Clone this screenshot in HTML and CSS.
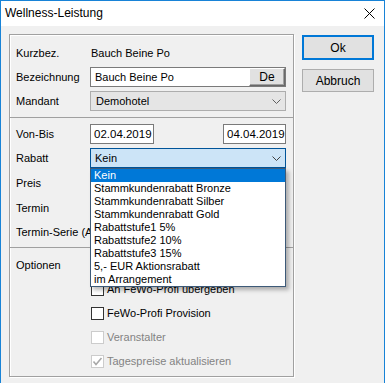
FILE: index.html
```html
<!DOCTYPE html>
<html lang="de">
<head>
  <meta charset="UTF-8" />
  <title>Wellness-Leistung</title>
  <link rel="stylesheet" href="styles.css">
</head>
<body>
  <div class="window">
    <div class="titlebar">
      <span class="title">Wellness-Leistung</span>
      <svg class="close" width="11" height="11" viewBox="0 0 11 11">
        <path d="M0.5 0.5 L10.5 10.5 M10.5 0.5 L0.5 10.5" stroke="#000" stroke-width="1" fill="none"/>
      </svg>
    </div>
    <div class="client">
      <div class="group">
        <div class="section s1">
          <span class="lbl">Kurzbez.</span>
          <span class="val">Bauch Beine Po</span>
          <span class="lbl">Bezeichnung</span>
          <div class="edit">
            <span class="edit-text">Bauch Beine Po</span>
            <span class="lang-btn">De</span>
          </div>
          <span class="lbl">Mandant</span>
          <div class="combo">
            <span>Demohotel</span>
            <svg class="chev" width="9" height="5" viewBox="0 0 9 5"><path d="M0.5 0.5 L4.5 4.5 L8.5 0.5" stroke="#606060" fill="none"/></svg>
          </div>
        </div>

        <div class="section s2">
          <span class="lbl">Von-Bis</span>
          <div class="dates">
            <span class="date">02.04.2019</span>
            <span class="date">04.04.2019</span>
          </div>
          <span class="lbl">Rabatt</span>
          <div class="combo focused">
            <span>Kein</span>
            <svg class="chev" width="9" height="5" viewBox="0 0 9 5"><path d="M0.5 0.5 L4.5 4.5 L8.5 0.5" stroke="#404040" fill="none"/></svg>
            <ul class="droplist">
              <li class="sel">Kein</li>
              <li>Stammkundenrabatt Bronze</li>
              <li>Stammkundenrabatt Silber</li>
              <li>Stammkundenrabatt Gold</li>
              <li>Rabattstufe1 5%</li>
              <li>Rabattstufe2 10%</li>
              <li>Rabattstufe3 15%</li>
              <li>5,- EUR Aktionsrabatt</li>
              <li>im Arrangement</li>
            </ul>
          </div>
          <span class="lbl">Preis</span>
          <span></span>
          <span class="lbl">Termin</span>
          <span></span>
          <span class="lbl wide">Termin-Serie (Arrangement)</span>
          <span></span>
        </div>

        <div class="section s3">
          <span class="lbl">Optionen</span>
          <span></span>
          <span></span>
          <label class="check"><span class="box"></span>An FeWo-Profi übergeben</label>
          <span></span>
          <label class="check"><span class="box"></span>FeWo-Profi Provision</label>
          <span></span>
          <label class="check disabled"><span class="box"></span>Veranstalter</label>
          <span></span>
          <label class="check disabled"><span class="box">
            <svg width="11" height="11" viewBox="0 0 11 11"><path d="M1.5 5.5 L4 8.5 L9.5 2" stroke="#a8a8a8" stroke-width="1.6" fill="none"/></svg>
          </span>Tagespreise aktualisieren</label>
        </div>
      </div>

      <div class="actions">
        <button class="btn default">Ok</button>
        <button class="btn">Abbruch</button>
      </div>
    </div>
  </div>
</body>
</html>
```

FILE: styles.css
```css
* { box-sizing: border-box; }
body {
  margin: 0;
  font-family: "Liberation Sans", Arial, sans-serif;
  font-size: 11px;
  color: #000;
  background: #f0f0f0;
}
.window {
  width: 385px;
  height: 383px;
  border: 1px solid #1883d7;
  border-bottom: none;
  background: #f0f0f0;
  overflow: hidden;
}
.titlebar {
  height: 25px;
  background: #fff;
  display: flex;
  align-items: center;
  justify-content: space-between;
  padding: 0 9px 1px 4px;
}
.title { font-size: 12px; }
.close { margin-top: 1px; }
.client {
  display: flex;
  align-items: flex-start;
  padding: 8px 0 0 8px;
}
.group {
  width: 285px;
  height: 343px;
  border: 1px solid #a0a0a0;
  box-shadow: inset 1px 1px #fff, 1px 1px #fff;
}
.section {
  display: grid;
  grid-template-columns: 74px 196px;
  row-gap: 4px;
  align-items: center;
  padding: 0 7px 0 6px;
}
.s1 { grid-auto-rows: 20px; padding-top: 8px; padding-bottom: 6px; }
.s2 {
  grid-template-rows: 20px 20px 21px 21px 20px;
  padding-top: 6px;
  padding-bottom: 5px;
  border-top: 1px solid #a0a0a0;
}
.s3 {
  grid-auto-rows: 20px;
  padding-top: 7px;
  padding-bottom: 5px;
  border-top: 1px solid #a0a0a0;
}
.lbl { white-space: nowrap; }
.val { padding-left: 1px; }
.edit {
  height: 20px;
  background: #fff;
  border: 1px solid #7a7a7a;
  display: flex;
  align-items: center;
  justify-content: space-between;
}
.edit-text { padding-left: 4px; }
.lang-btn {
  width: 36px;
  height: 18px;
  background: #e1e1e1;
  border: 1px solid;
  border-color: #fff #696969 #696969 #fff;
  box-shadow: inset -1px -1px #a0a0a0;
  display: flex;
  align-items: center;
  justify-content: center;
  font-size: 12px;
}
.combo {
  position: relative;
  height: 20px;
  background: #e5e5e5;
  border: 1px solid #adadad;
  display: flex;
  align-items: center;
  justify-content: space-between;
  padding: 0 4px 0 5px;
}
.combo.focused {
  background: #cce4f7;
  border-color: #005499;
  padding-left: 4px;
}
.chev { margin-top: 1px; }
.dates {
  display: flex;
  justify-content: space-between;
}
.date {
  width: 64px;
  height: 20px;
  background: #fff;
  border: 1px solid #7a7a7a;
  padding-left: 3px;
  line-height: 18px;
  font-size: 11.5px;
  white-space: nowrap;
  overflow: hidden;
}
.date + .date { width: 63px; }
.droplist {
  position: absolute;
  z-index: 5;
  top: 19px;
  left: -1px;
  width: 196px;
  margin: 0;
  padding: 0;
  list-style: none;
  background: #fff;
  border: 1px solid #3d5a78;
  box-shadow: 3px 3px 4px rgba(0, 0, 0, 0.28);
}
.droplist li {
  height: 13px;
  line-height: 13px;
  padding-left: 3px;
  white-space: nowrap;
}
.droplist li.sel {
  background: #0078d7;
  color: #fff;
}
.check {
  display: flex;
  align-items: center;
  gap: 3px;
  padding-left: 1px;
  white-space: nowrap;
}
.box {
  width: 13px;
  height: 13px;
  background: #fff;
  border: 1px solid #333;
  display: flex;
  align-items: center;
  justify-content: center;
}
.check.disabled { color: #838383; }
.check.disabled .box { border-color: #cccccc; }
.actions {
  display: flex;
  flex-direction: column;
  gap: 9px;
  margin-left: 8px;
  padding-top: 1px;
}
.btn {
  width: 72px;
  height: 23px;
  font-family: inherit;
  font-size: 12px;
  background: #e1e1e1;
  border: 1px solid #adadad;
  padding: 0;
  color: #000;
}
.btn.default {
  height: 25px;
  border: 2px solid #0078d7;
}
```
